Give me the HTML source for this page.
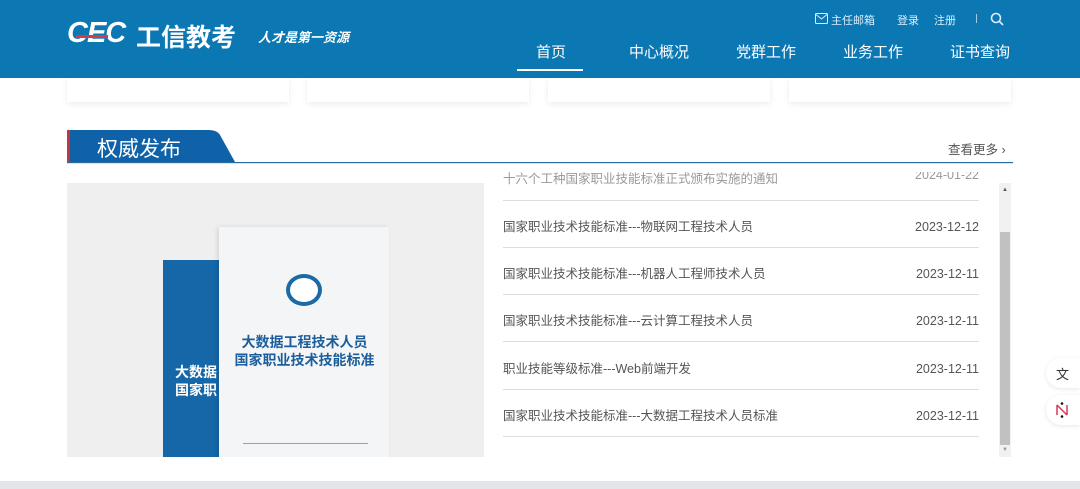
<!DOCTYPE html>
<html><head><meta charset="utf-8"><style>
*{margin:0;padding:0;box-sizing:border-box}
body{width:1080px;height:489px;overflow:hidden;background:#fff;font-family:"Liberation Sans","Noto Sans CJK SC",sans-serif;position:relative}
.hdr{position:absolute;left:0;top:0;width:1080px;height:78px;background:#0b78b4}
.abs{position:absolute}
.nav{color:#fff;font-size:15px;top:41px}
.top{color:#dbeefa;font-size:11px;top:12px}
.card{position:absolute;top:78px;height:24px;width:222px;background:#fff;box-shadow:0 2px 6px rgba(0,0,0,.08)}
.row{position:absolute;left:503px;width:476px;height:47px;border-bottom:1px solid #ddd;font-size:12.5px;color:#555;line-height:53px}
.row span{position:absolute;right:0;top:0}
</style></head><body>
<div class="hdr"></div>
<div class="abs" style="left:67px;top:17px;font-size:29px;font-weight:bold;color:#fff;letter-spacing:-1px;font-style:italic">CEC</div>
<div class="abs" style="left:76px;top:35px;width:32px;height:3px;background:#d23b4a"></div>
<div class="abs" style="left:136px;top:18px;font-size:25px;color:#fff;font-weight:bold">工信教考</div>
<div class="abs" style="left:258px;top:27px;font-size:13px;color:#fff;font-weight:bold;font-style:italic">人才是第一资源</div>
<svg class="abs" style="left:815px;top:13px" width="13" height="11" viewBox="0 0 13 11"><rect x="0.5" y="0.5" width="12" height="10" rx="1" fill="none" stroke="#dbeefa"/><path d="M1 1.5L6.5 6L12 1.5" fill="none" stroke="#dbeefa"/></svg>
<div class="abs top" style="left:831px">主任邮箱</div>
<div class="abs top" style="left:897px">登录</div>
<div class="abs top" style="left:934px">注册</div>
<div class="abs" style="left:976px;top:14px;width:1px;height:9px;background:#9fcbe6"></div>
<svg class="abs" style="left:990px;top:12px" width="14" height="14" viewBox="0 0 14 14"><circle cx="6" cy="6" r="4.5" fill="none" stroke="#dbeefa" stroke-width="1.6"/><path d="M9.5 9.5L13 13" stroke="#dbeefa" stroke-width="1.6"/></svg>
<div class="abs nav" style="left:536px">首页</div>
<div class="abs" style="left:517px;top:69px;width:66px;height:2px;background:#fff"></div>
<div class="abs nav" style="left:629px">中心概况</div>
<div class="abs nav" style="left:736px">党群工作</div>
<div class="abs nav" style="left:843px">业务工作</div>
<div class="abs nav" style="left:950px">证书查询</div>
<div class="card" style="left:67px"></div><div class="card" style="left:307px"></div><div class="card" style="left:548px"></div><div class="card" style="left:789px"></div>
<svg class="abs" style="left:67px;top:129px" width="946" height="36"><path d="M3 1H142Q150 1 153 6L168 33H3Q0 33 0 30V4Q0 1 3 1Z" fill="#0f62a8"/><rect x="0" y="1" width="3" height="32" fill="#c9323f"/><rect x="0" y="33" width="946" height="1.2" fill="#2a6da3"/></svg>
<div class="abs" style="left:97px;top:133px;font-size:21px;color:#fff">权威发布</div>
<div class="abs" style="left:948px;top:139px;font-size:12.5px;color:#555">查看更多 ›</div>
<div class="abs" style="left:67px;top:183px;width:417px;height:274px;background:#efefef;overflow:hidden">
 <div class="abs" style="left:96px;top:77px;width:80px;height:200px;background:#1567a8"></div>
 <div class="abs" style="left:108px;top:180px;color:#fff;font-size:14px;font-weight:bold;line-height:18px">大数据<br>国家职</div>
 <div class="abs" style="left:152px;top:44px;width:170px;height:240px;background:#f4f5f6;box-shadow:-2px 0 4px rgba(0,0,0,.1)"></div>
 <div class="abs" style="left:219px;top:91px;width:36px;height:32px;border-radius:50%;border:4px solid #1a6aa6;background:#fff"></div>
 <div class="abs" style="left:160px;top:150px;width:155px;text-align:center;color:#1b5e9b;font-size:14px;font-weight:bold;line-height:18px">大数据工程技术人员<br>国家职业技术技能标准</div>
 <div class="abs" style="left:176px;top:260px;width:125px;height:1px;background:#8aa"></div>
</div>
<div class="abs" style="left:503px;top:172px;width:476px;height:29px;border-bottom:1px solid #ddd;overflow:hidden"><div style="margin-top:-4px;font-size:12.5px;color:#999">十六个工种国家职业技能标准正式颁布实施的通知<span style="position:absolute;right:0">2024-01-22</span></div></div>
<div class="row" style="top:201px">国家职业技术技能标准---物联网工程技术人员<span>2023-12-12</span></div>
<div class="row" style="top:248px">国家职业技术技能标准---机器人工程师技术人员<span>2023-12-11</span></div>
<div class="row" style="top:295px">国家职业技术技能标准---云计算工程技术人员<span>2023-12-11</span></div>
<div class="row" style="top:343px">职业技能等级标准---Web前端开发<span>2023-12-11</span></div>
<div class="row" style="top:390px">国家职业技术技能标准---大数据工程技术人员标准<span>2023-12-11</span></div>
<div class="abs" style="left:484px;top:437px;width:516px;height:20px;background:#fff"></div>
<div class="abs" style="left:999px;top:183px;width:12px;height:274px;background:#f1f1f1"></div>
<div class="abs" style="left:1000px;top:232px;width:10px;height:213px;background:#c1c1c1"></div>
<div class="abs" style="left:1002px;top:187px;font-size:6px;color:#555">▲</div>
<div class="abs" style="left:1002px;top:447px;font-size:6px;color:#999">▼</div>
<div class="abs" style="left:1046px;top:358px;width:34px;height:30px;border-radius:15px 0 0 15px;background:#fff;box-shadow:0 1px 4px rgba(0,0,0,.1);font-size:13px;padding:6px 0 0 10px;color:#333">文</div>
<div class="abs" style="left:1046px;top:395px;width:34px;height:30px;border-radius:15px 0 0 15px;background:#fff;box-shadow:0 1px 4px rgba(0,0,0,.1)"><svg style="margin:7px 0 0 8px" width="16" height="16"><path d="M3 3L3 13M3 3L13 13M13 3L13 13" stroke="#d33a5a" stroke-width="1.5" fill="none"/><circle cx="8" cy="1.5" r="1.3" fill="#111"/><circle cx="8" cy="14.5" r="1.3" fill="#111"/></svg></div>
<div class="abs" style="left:0;top:481px;width:1080px;height:8px;background:#e3e5ea"></div>
</body></html>
